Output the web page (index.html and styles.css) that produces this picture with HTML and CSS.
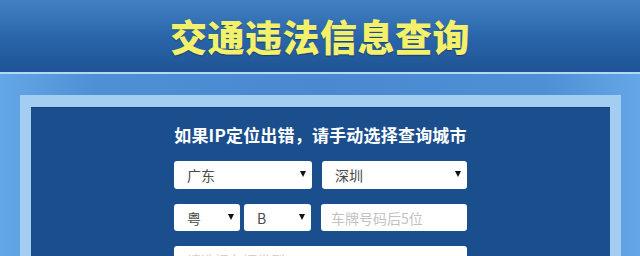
FILE: index.html
```html
<!DOCTYPE html>
<html lang="zh-CN">
<head>
<meta charset="utf-8">
<title>交通违法信息查询</title>
<link rel="stylesheet" href="styles.css">
</head>
<body>
<header class="header">
  <h1 class="title">交通违法信息查询</h1>
</header>
<main class="stage">
  <div class="frame">
    <section class="panel">
      <h2 class="subtitle">如果IP定位出错，请手动选择查询城市</h2>
      <form class="form">
        <div class="row row-city">
          <div class="select"><span class="value">广东</span></div>
          <div class="select"><span class="value">深圳</span></div>
        </div>
        <div class="row row-plate">
          <div class="select"><span class="value">粤</span></div>
          <div class="select"><span class="value">B</span></div>
          <div class="input"><span class="placeholder">车牌号码后5位</span></div>
        </div>
        <div class="row row-full">
          <div class="select select-faint"><span class="placeholder">请选择车辆类型</span></div>
        </div>
      </form>
    </section>
  </div>
</main>
</body>
</html>
```

FILE: styles.css
```css
html, body {
  margin: 0;
  padding: 0;
}
body {
  width: 640px;
  height: 256px;
  overflow: hidden;
  background: #5a9bdd;
  font-family: "Noto Sans CJK SC", "Noto Sans", sans-serif;
}
.header {
  height: 72px;
  background: linear-gradient(to bottom, #4280c4 0%, #2b66aa 50%, #1e5394 100%);
  border-bottom: 2px solid #b3d8f4;
  display: flex;
  align-items: center;
  justify-content: center;
}
.title {
  margin: 0;
  font-size: 37px;
  font-weight: 900;
  color: #f3f06c;
  line-height: 1;
  letter-spacing: 0.5px;
  text-shadow: 0 1px 1px rgba(10, 30, 70, 0.5);
}
.stage {
  padding: 21px 19px 0 20px;
  background: linear-gradient(to right, #64a7e8 0%, #4f8fd4 15%, #4a89cf 50%, #4f8fd4 85%, #64a7e8 100%);
  height: 200px;
}
.frame {
  background: #a4cdf2;
  padding: 12px 11px 0 11px;
  height: 200px;
}
.panel {
  background: #1b4e8c;
  height: 200px;
  border-top: 1px solid #173f75;
  padding-top: 15px;
  display: flex;
  flex-direction: column;
  align-items: center;
}
.subtitle {
  margin: 0;
  font-size: 17px;
  font-weight: 700;
  color: #ffffff;
  line-height: 24px;
  letter-spacing: 0.2px;
}
.form {
  margin-top: 14px;
  width: 293px;
  display: flex;
  flex-direction: column;
  gap: 15px;
}
.row {
  display: flex;
  height: 28px;
}
.row-city {
  gap: 10px;
}
.row-city .select:first-child {
  width: 138px;
}
.row-city .select:last-child {
  width: 145px;
}
.row-plate {
  height: 27px;
}
.row-plate .select:nth-child(1) {
  width: 66px;
  margin-right: 4px;
}
.row-plate .select:nth-child(2) {
  width: 67px;
  margin-right: 10px;
}
.row-plate .input {
  width: 146px;
}
.row-full .select {
  width: 293px;
}
.select, .input {
  position: relative;
  background: #ffffff;
  border-radius: 3px;
  box-sizing: border-box;
  padding-left: 13px;
  display: flex;
  align-items: center;
  font-size: 14px;
  color: #4a4a4a;
}
.select::after {
  content: "";
  position: absolute;
  right: 6px;
  top: 50%;
  margin-top: -4px;
  border-left: 3px solid transparent;
  border-right: 3px solid transparent;
  border-top: 6px solid #111111;
}
.select-faint::after {
  border-top-color: #cccccc;
}
.input {
  padding-left: 10px;
}
.placeholder {
  color: #c2c2c2;
}
.row-full .placeholder {
  color: #d0d0d0;
}
```
